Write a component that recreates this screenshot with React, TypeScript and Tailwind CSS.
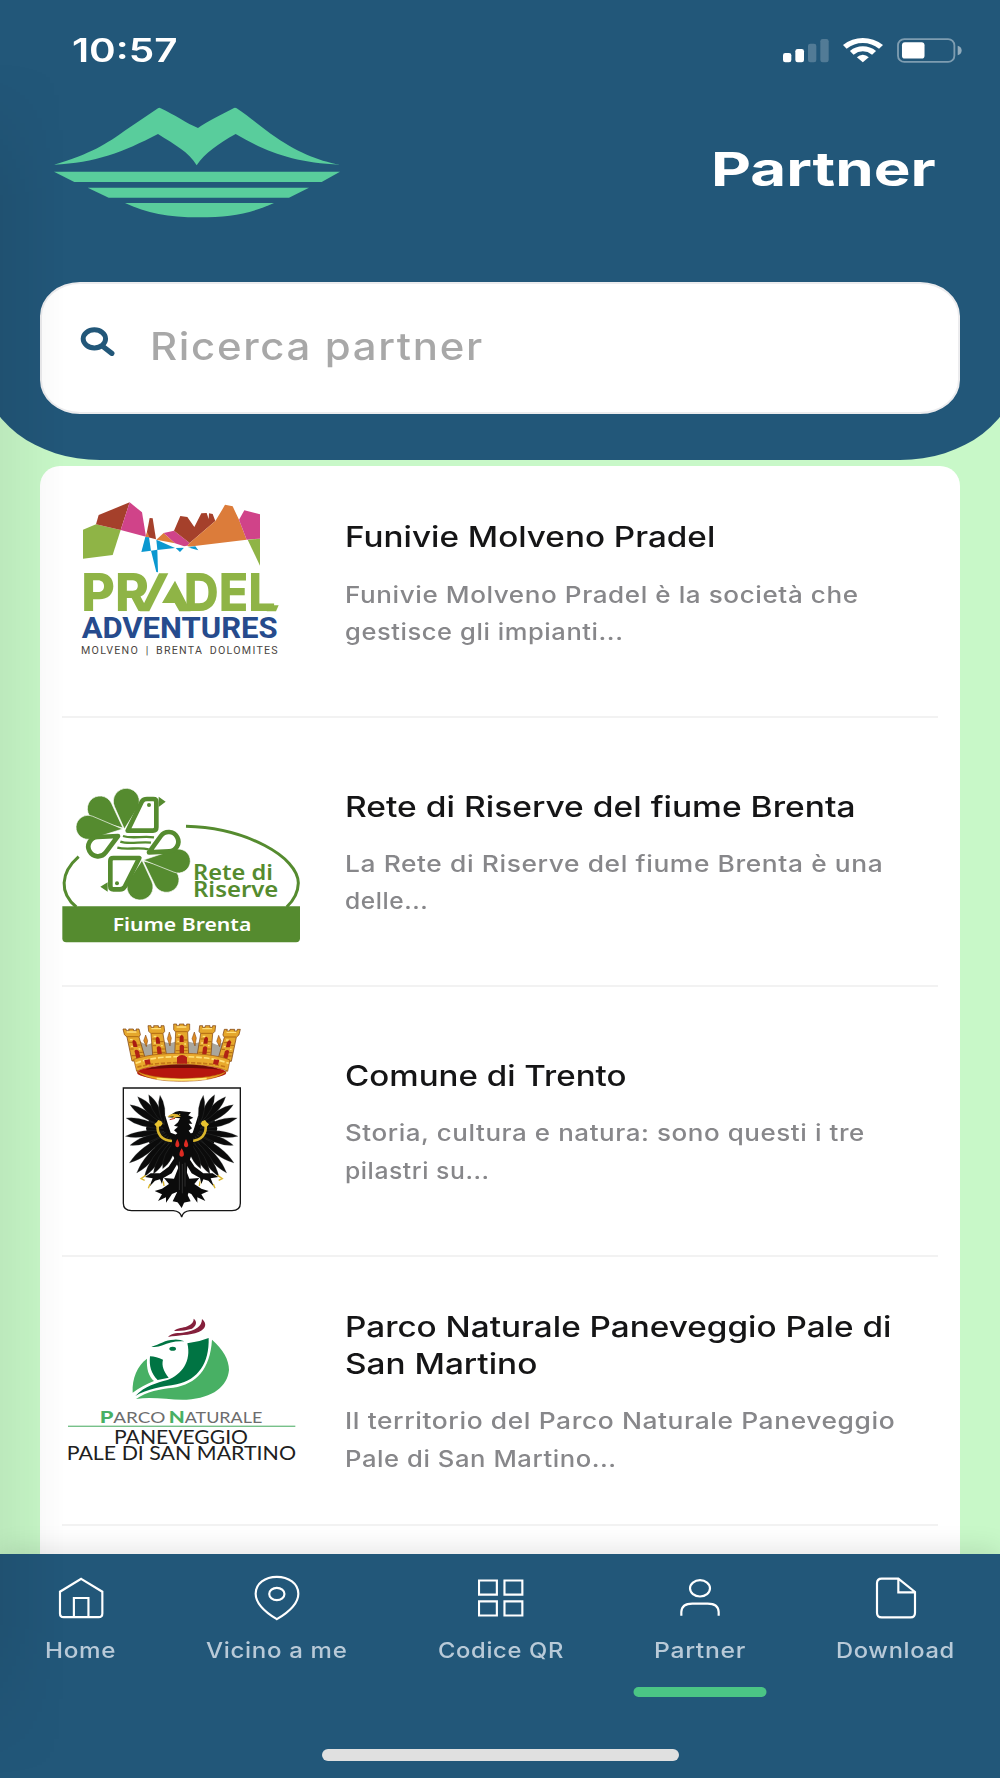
import { ReactNode, useLayoutEffect, useRef, useState } from 'react';

interface WideTextProps {
  width: number;
  className?: string;
  children: string;
}

// Stretches a single line of text horizontally to the given width
function WideText({ width, className = '', children }: WideTextProps) {
  const ref = useRef<HTMLSpanElement>(null);
  const [scale, setScale] = useState(1);

  useLayoutEffect(() => {
    if (ref.current) setScale(width / ref.current.offsetWidth);
  }, [width, children]);

  return (
    <span className="block" style={{ width }}>
      <span
        ref={ref}
        className={`inline-block origin-left whitespace-nowrap align-top ${className}`}
        style={{ transform: `scaleX(${scale})` }}
      >
        {children}
      </span>
    </span>
  );
}

function SignalIcon() {
  return (
    <svg viewBox="851 114 138 75" className="h-[25px] w-[46px]" fill="#fff">
      <rect x="851" y="159" width="25" height="28" rx="7" />
      <rect x="888" y="147" width="26" height="40" rx="7" />
      <rect x="926" y="131" width="25" height="56" rx="7" opacity=".22" />
      <rect x="963" y="117" width="25" height="70" rx="7" opacity=".22" />
    </svg>
  );
}

function WifiIcon() {
  return (
    <svg viewBox="1029 114 121 75" className="h-[25px] w-[40px]" fill="#fff">
      <path d="M1029 135Q1056 114 1089 114T1150 135L1138 146Q1116 129 1089 129T1040 146Z" />
      <path d="M1050 153Q1067 139 1089 139T1129 153L1117 164Q1104 154 1089 154T1061 164Z" />
      <path d="M1071 172Q1079 164 1089 164T1107 172L1089 187Z" />
    </svg>
  );
}

function BatteryIcon() {
  return (
    <svg viewBox="1191 114 196 75" className="h-[25px] w-[65px]">
      <rect x="1194" y="117" width="170" height="69" rx="19" fill="none" stroke="#fff" strokeWidth="5.500" opacity=".42" />
      <rect x="1206" y="127" width="68" height="49" rx="9" fill="#fff" />
      <path d="M1374 137Q1386 141 1386 151.500T1374 166Z" fill="#fff" opacity=".5" />
    </svg>
  );
}

function BrandLogo() {
  return (
    <svg viewBox="162 320 858 333" className="mt-[6px] h-[111px] w-[286px] self-start" fill="#59cd9c">
      <path d="M162 493C270 462 325 427 374 391L474 324Q478 321 482 324C524 343 560 370 594 383C622 364 664 342 702 323Q706 321 710 324C748 350 780 376 812 400C890 455 950 480 1020 493C880 486 800 455 707 401C655 430 615 458 590 495C566 454 525 434 474 401C370 455 285 488 162 493Z" />
      <path d="M162 514H1020L965 545H223Z" />
      <path d="M263 562H927L867 592H326Z" />
      <path d="M375 608H822C745 642 690 651 597 651S440 638 375 608Z" />
    </svg>
  );
}

function SearchIcon() {
  return (
    <svg viewBox="240 202 105 88" className="h-[29px] w-[35px]" fill="none" stroke="#225779">
      <ellipse cx="283" cy="238" rx="34" ry="27.500" strokeWidth="15" />
      <path d="M310 262L336 282" strokeWidth="16" strokeLinecap="round" />
    </svg>
  );
}

function PradelLogo() {
  return (
    <svg viewBox="6 10 714 600" className="h-[200px] w-[238px]">
      <path d="M69 150L108 134L182 151L158 226L69 237Z" fill="#8fb446" />
      <path d="M108 134L116 106L209 68L182 151Z" fill="#a5402b" />
      <path d="M209 68L246 98L258 171L182 151Z" fill="#d04389" />
      <path d="M258 171L269 115L278 116L288 179Z" fill="#a5402b" />
      <path d="M257 172L262 157L268 173Z" fill="#dc7c3a" />
      <path d="M256 172L267 173L273 213L244 217Z" fill="#0b98d0" />
      <path d="M273 213L292 210L294 278L289 277Z" fill="#0b98d0" />
      <path d="M289 180L345 205L292 211Z" fill="#0b98d0" />
      <path d="M289 180L311 160L345 191Z" fill="#dc7c3a" />
      <path d="M311 160L342 153L389 190L379 202L345 191Z" fill="#d04389" />
      <path d="M342 153L361 109L382 112L403 142L424 101L440 100L446 118L447 101L458 103L466 124L389 190Z" fill="#a5402b" />
      <path d="M389 190L466 124L486 91L495 75L518 80L537 120L560 180L379 202Z" fill="#dc7c3a" />
      <path d="M537 120L553 92L600 104V177L560 180Z" fill="#d04389" />
      <path d="M563 180L600 177V258Z" fill="#8fb446" />
      <path d="M347 205L372 204L360 217ZM382 203L406 200L415 212Z" fill="#0b98d0" />
      <path d="M366 203L379 198L393 203L379 205Z" fill="#fff" />

      {/* PRADEL: the A is a slanted stroke with a small peak */}
      <g fill="#8fb446" fontFamily="Inter, sans-serif" fontWeight="800" fontSize="158">
        <text x="64" y="395" textLength="204" lengthAdjust="spacingAndGlyphs">PR</text>
        <text x="371" y="395" textLength="276" lengthAdjust="spacingAndGlyphs">DEL</text>
      </g>
      <path d="M240 395L297 281H325L268 395Z" fill="#8fb446" />
      <path d="M345 303L392 395H358L344 370H306Z" fill="#8fb446" />
      <path d="M628 377H656L648 395H620Z" fill="#8fb446" />
      <text x="65" y="475" textLength="588" lengthAdjust="spacingAndGlyphs" fontFamily="Roboto, sans-serif" fontWeight="700" fontSize="88" fill="#264b8d">ADVENTURES</text>
      <text x="63" y="524" textLength="590" lengthAdjust="spacing" fontFamily="Roboto, sans-serif" fontSize="32" fill="#4b4642" wordSpacing="8">MOLVENO | BRENTA DOLOMITES</text>
    </svg>
  );
}

// Drop shape: a point at (bx, by) with tangents to a circle of radius r
function leafPath(bx: number, by: number, cx: number, cy: number, r: number) {
  const d = Math.hypot(cx - bx, cy - by);
  const angle = Math.atan2(by - cy, bx - cx);
  const spread = Math.acos(r / d);
  const x1 = cx + r * Math.cos(angle + spread);
  const y1 = cy + r * Math.sin(angle + spread);
  const x2 = cx + r * Math.cos(angle - spread);
  const y2 = cy + r * Math.sin(angle - spread);
  return `M${bx} ${by}L${x1} ${y1}A${r} ${r} 0 1 1 ${x2} ${y2}Z`;
}

function ReteRiserveLogo() {
  return (
    <svg viewBox="36 -35 714 561" className="h-[187px] w-[238px]">
      <g fill="none" stroke="#558b2f" strokeWidth="9">
        <path d="M408 170C590 175 744 262 745 340Q744 380 710 412" />
        <path d="M86 261C30 310 28 370 79 412" />
      </g>
      <path d="M37 410H750V506Q750 518 738 518H49Q37 518 37 506Z" fill="#558b2f" />
      <g fill="#558b2f" stroke="#fff" strokeWidth="2">
        <path d={leafPath(223, 178, 229, 95, 39)} />
        <path d={leafPath(219, 175, 150, 117, 38)} />
        <path d={leafPath(218, 178, 114, 173, 36)} />
        <path d={leafPath(276, 272, 270, 352, 39)} />
        <path d={leafPath(280, 274, 349, 330, 38)} />
        <path d={leafPath(280, 271, 385, 274, 36)} />
      </g>
      <g fill="#558b2f">
        <path d="M326 81L347 96L326 112ZM173 338L151 351L173 366Z" />
        <circle cx="297" cy="106" r="6" />
        <circle cx="201" cy="341" r="6" />
      </g>
      <g fill="#fff" stroke="#558b2f" strokeWidth="14" strokeLinejoin="round">
        <path d="M233 183L276 95Q281 88 291 88H310Q319 88 319 97V173Q319 183 309 183Z" />
        <path d="M268 265H190Q181 265 181 274V350Q181 359 190 359H210Q220 359 225 350Z" />
        <path d={leafPath(204, 199, 144, 231, 29)} />
        <path d={leafPath(297, 248, 356, 216, 29)} />
      </g>
      <g fill="#558b2f">
        <circle cx="297" cy="106" r="6" />
        <circle cx="201" cy="341" r="6" />
      </g>
      <g fill="none" stroke="#558b2f" strokeWidth="7">
        <path d="M219 199C245 208 280 198 312 203" />
        <path d="M211 216C238 226 275 214 303 219" />
        <path d="M202 234C232 242 265 231 296 239" />
      </g>
      <g fontFamily="'Noto Sans', sans-serif" fontWeight="600" fill="#558b2f" fontSize="62">
        <text x="429" y="330" textLength="240" lengthAdjust="spacingAndGlyphs">Rete di</text>
        <text x="429" y="382" textLength="256" lengthAdjust="spacingAndGlyphs">Riserve</text>
      </g>
      <text x="188" y="483" textLength="416" lengthAdjust="spacingAndGlyphs" fontFamily="'Noto Sans', sans-serif" fontWeight="600" fontSize="54" fill="#fff">Fiume Brenta</text>
    </svg>
  );
}

// [base x, base y, tip x, tip y, width]
const feathers = [
  [186, 345, 90, 284, 21],
  [188, 340, 113, 260, 22],
  [190, 340, 146, 254, 21],
  [192, 345, 180, 256, 18],
  [190, 355, 78, 324, 20],
  [192, 364, 76, 379, 18],
  [196, 368, 90, 406, 20],
  [200, 374, 88, 459, 22],
  [205, 380, 110, 489, 22],
  [212, 384, 133, 500, 22],
  [220, 388, 160, 492, 22],
  [228, 390, 188, 476, 22],
];

function featherPath([bx, by, tx, ty, w]: number[]) {
  const len = Math.hypot(tx - bx, ty - by);
  const nx = (-(ty - by) / len) * w;
  const ny = ((tx - bx) / len) * w;
  const mx = bx + (tx - bx) * 0.6;
  const my = by + (ty - by) * 0.6;
  return `M${bx} ${by}Q${mx + nx} ${my + ny} ${tx} ${ty}Q${mx - nx} ${my - ny} ${bx} ${by}Z`;
}

function Wing() {
  return (
    <g>
      <path d="M150 320L170 312L196 318L206 350L212 368L245 380V430L225 440L180 425L148 400L138 355Z" fill="#0b0b0b" />
      {feathers.map((f, i) => (
        <path key={i} d={featherPath(f)} fill="#0b0b0b" stroke="#55585a" strokeWidth=".7" />
      ))}
      <path d="M174 343C168 374 188 391 216 393" fill="none" stroke="#d9b52b" strokeWidth="8" />
      <path d="M163 343L170 337L175 330L184 334L188 341L182 349L170 351Z" fill="#e8c32f" />
      {/* leg and claws */}
      <path d="M226 440L206 470L180 490L152 490L135 501L158 505L148 530L165 512L180 508L186 522L190 504L215 490L236 455Z" fill="#0b0b0b" />
      <path d="M137 496L123 506L134 511M150 522L145 535M190 514L192 528" fill="none" stroke="#d9b52b" strokeWidth="4" />
      {/* tail */}
      <path d="M238 465L222 506L192 504L207 522L186 536L164 543L186 553L174 573L198 562L198 578L216 552L232 545L218 574L240 578Z" fill="#0b0b0b" />
    </g>
  );
}

function Tower({ x, y, tilt }: { x: number; y: number; tilt: number }) {
  return (
    <g transform={`translate(${x} ${y}) skewX(${tilt})`}>
      <path d="M-24 0H-15V5H-7V0H7V5H15V0H24V17L18 24L21 96H-21L-18 24L-24 17Z" fill="#e5a72c" stroke="#7a3c0c" strokeWidth="2" />
      <path d="M-17 23H17M-16 40H-6M6 48H17M-17 60H-7M7 70H18M-18 80H18" stroke="#a8600f" strokeWidth="2.500" />
      <path d="M-15 9H14M-11 32H-3M-13 52H-7M8 60H13" stroke="#ffe07a" strokeWidth="4" />
      <path d="M-6 54V39Q0 27 6 39V54Z" fill="#a81c12" />
      <path d="M-6 94V66Q0 58 7 66V94Z" fill="#b02315" />
    </g>
  );
}

function TrentoLogo() {
  return (
    <svg viewBox="-114 3 714 660" className="h-[220px] w-[238px]">
      <path d="M112 90L140 105L175 92L210 100L245 90L285 100L320 92L352 105L380 92L366 160H124Z" fill="#aaa69c" />
      <g fill="#dd8c24" stroke="#7a3c0c" strokeWidth="1.500">
        <path d="M137 75L143 92L139 110L131 92ZM208 66L214 84L210 108L202 86ZM283 66L289 84L285 108L276 86ZM356 76L363 92L359 110L350 94Z" />
      </g>
      <Tower x={93} y={57} tilt={14} />
      <Tower x={168} y={47} tilt={7} />
      <Tower x={245} y={42} tilt={0} />
      <Tower x={323} y={47} tilt={-7} />
      <Tower x={397} y={58} tilt={-14} />
      <path d="M101 148C150 132 200 130 245 130S350 134 390 150L383 184C350 168 300 164 245 164S140 168 110 184Z" fill="#e9a92c" stroke="#9c5310" strokeWidth="2" />
      <path d="M107 160C150 142 200 140 245 140S345 144 386 160" fill="none" stroke="#ffe27a" strokeWidth="5" strokeDasharray="17 6" />
      <path d="M112 172C165 153 325 153 380 172" fill="none" stroke="#c57718" strokeWidth="5" strokeDasharray="13 5" />
      <path d="M231 161V142Q246 128 261 142V161ZM137 165L133 150L149 148L152 162ZM354 165L358 150L342 148L339 162Z" fill="#b32016" />
      <ellipse cx="245" cy="188" rx="134" ry="23" fill="#b6160e" />
      <path d="M135 180C180 158 315 158 360 180C320 172 170 172 135 180Z" fill="#6d0c08" />
      <path d="M110 181C122 203 180 214 245 214S370 203 381 181C365 198 300 205 245 205S126 197 110 181Z" fill="#f0a323" stroke="#9c4b0d" strokeWidth="1.500" />
      <path d="M170 206Q245 213 320 206" fill="none" stroke="#ffec7c" strokeWidth="5" />

      <path d="M70 234H421V580Q421 602 396 602H270Q249 604 245 621Q241 604 220 602H95Q70 602 70 580Z" fill="#fff" stroke="#161616" strokeWidth="4" />
      <Wing />
      <g transform="translate(490 0) scale(-1 1)">
        <Wing />
      </g>
      <path d="M204 322L217 311Q230 300 246 304L273 307L265 316L280 323L268 329L277 341L266 341L276 355L266 362L280 380L278 425L262 470L258 520L266 548L245 594L228 570L236 520L234 470L212 420L218 382L232 370L222 361L234 350L222 347L234 337L240 325Z" fill="#0b0b0b" />
      <path d="M202 321Q214 307 233 313L243 320L228 322L214 327L222 319Z" fill="#dfb632" />
      <path d="M209 329L225 325" stroke="#c3271d" strokeWidth="3" />
      <circle cx="239" cy="313" r="2" fill="#e6c94a" />
      <g fill="#dd2b22">
        <path d="M232 387Q241 403 237 409Q232 415 227 409Q223 403 232 387ZM258 387Q267 403 264 409Q258 415 253 409Q249 403 258 387ZM245 415Q254 430 251 437Q245 443 239 437Q236 430 245 415Z" />
      </g>
      <path d="M238 455V540M247 462V550M255 458V530" stroke="#777" strokeWidth="1" />
    </svg>
  );
}

function PaneveggioLogo() {
  return (
    <svg viewBox="36 1 714 540" className="h-[180px] w-[238px]">
      <path d="M486 120C520 150 537 180 537 211C532 260 490 295 410 300C360 302 310 290 258 298C290 275 330 268 370 264C440 252 480 210 486 120Z" fill="#48b064" />
      <path d="M248 279C246 235 262 198 291 177C289 207 296 230 312 244C288 254 268 264 248 279Z" fill="#48b064" />
      <path d="M300 170C313 170 325 175 339 180C334 198 342 216 356 234L323 241C303 222 297 198 300 170Z" fill="#007443" />
      <path d="M412 131Q444 128 476 115C478 190 445 240 380 254C340 261 290 268 256 289C285 258 320 250 352 241C395 226 425 185 412 131Z" fill="#007443" />
      <path d="M304 141C330 134 345 120 372 120Q390 119 403 125C375 123 355 130 338 137Q320 144 304 141Z" fill="#007443" />
      <ellipse cx="368" cy="147" rx="10" ry="6" fill="#007443" />
      <path d="M372 94C384 84 398 86 412 80Q432 71 431 57C442 64 440 78 426 87Q402 95 372 94Z" fill="#85203c" />
      <path d="M354 112C366 98 385 102 405 98C436 92 456 80 456 58C472 72 468 88 446 97C418 108 385 106 354 112Z" fill="#85203c" />
      <g fontFamily="Lato, sans-serif" fill="#6d6d6d" fontSize="46">
        <text x="149" y="369" textLength="197" lengthAdjust="spacingAndGlyphs">
          <tspan fontWeight="900" fontSize="53" fill="#48b064">P</tspan>ARCO
        </text>
        <text x="356" y="369" textLength="281" lengthAdjust="spacingAndGlyphs">
          <tspan fontWeight="900" fontSize="53" fill="#48b064">N</tspan>ATURALE
        </text>
      </g>
      <rect x="54" y="378" width="682" height="3.500" fill="#5db573" />
      <g fontFamily="Lato, sans-serif" fill="#202020" fontSize="56">
        <text x="192" y="434" textLength="402" lengthAdjust="spacingAndGlyphs">PANEVEGGIO</text>
        <text x="50" y="482" textLength="688" lengthAdjust="spacingAndGlyphs">PALE DI SAN MARTINO</text>
      </g>
    </svg>
  );
}

interface Line {
  text: string;
  width: number;
}

interface Partner {
  logo: ReactNode;
  title: Line[];
  description: Line[];
}

const partners: Partner[] = [
  {
    logo: <PradelLogo />,
    title: [{ text: 'Funivie Molveno Pradel', width: 370 }],
    description: [
      { text: 'Funivie Molveno Pradel è la società che', width: 513 },
      { text: 'gestisce gli impianti...', width: 279 },
    ],
  },
  {
    logo: <ReteRiserveLogo />,
    title: [{ text: 'Rete di Riserve del fiume Brenta', width: 510 }],
    description: [
      { text: 'La Rete di Riserve del fiume Brenta è una', width: 538 },
      { text: 'delle...', width: 83 },
    ],
  },
  {
    logo: <TrentoLogo />,
    title: [{ text: 'Comune di Trento', width: 281 }],
    description: [
      { text: 'Storia, cultura e natura: sono questi i tre', width: 520 },
      { text: 'pilastri su...', width: 145 },
    ],
  },
  {
    logo: <PaneveggioLogo />,
    title: [
      { text: 'Parco Naturale Paneveggio Pale di', width: 547 },
      { text: 'San Martino', width: 192 },
    ],
    description: [
      { text: 'Il territorio del Parco Naturale Paneveggio', width: 550 },
      { text: 'Pale di San Martino...', width: 272 },
    ],
  },
];

function PartnerRow({ partner }: { partner: Partner }) {
  return (
    <li className="flex h-[269.33px] items-center gap-[44.5px] border-b-2 border-[#f2f2f2] first:h-[252px] first:pb-[17px]">
      <div className="flex-shrink-0">{partner.logo}</div>
      <div className="flex flex-col gap-5 pt-1">
        <h2 className="text-[28.5px] font-medium leading-[37.4px] text-[#151516]">
          {partner.title.map((line) => (
            <WideText key={line.text} width={line.width}>{line.text}</WideText>
          ))}
        </h2>
        <p className="text-[22.5px] font-[450] leading-[37.4px] tracking-[0.5px] text-[#87878a]">
          {partner.description.map((line) => (
            <WideText key={line.text} width={line.width}>{line.text}</WideText>
          ))}
        </p>
      </div>
    </li>
  );
}

const tabs = [
  {
    label: 'Home',
    width: 71,
    icon: (
      <svg viewBox="175 225 139 138" className="h-[46px] w-[46px]">
        <path d="M245 236L309 275V341Q309 352 298 352H192Q181 352 181 341V275ZM223 352V294H267V352" />
      </svg>
    ),
  },
  {
    label: 'Vicino a me',
    width: 141,
    icon: (
      <svg viewBox="759 225 139 138" className="h-[46px] w-[46px]">
        <path d="M828 358C790 335 764 310 764 281C764 250 793 230 828 230S893 250 893 281C893 310 867 335 828 358Z" />
        <ellipse cx="828" cy="282" rx="23" ry="18.500" />
      </svg>
    ),
  },
  {
    label: 'Codice QR',
    width: 126,
    icon: (
      <svg viewBox="1432 225 139 138" className="h-[46px] w-[46px]">
        <path d="M1435 241H1489V284H1435ZM1512 241H1566V284H1512ZM1435 304H1489V347H1435ZM1512 304H1566V347H1512Z" />
      </svg>
    ),
  },
  {
    label: 'Partner',
    width: 92,
    active: true,
    icon: (
      <svg viewBox="531 225 138 138" className="h-[46px] w-[46px]">
        <ellipse cx="600" cy="265" rx="30" ry="24.500" />
        <path d="M544 347V336Q545 311 577 311H623Q655 311 656 336V347" />
      </svg>
    ),
  },
  {
    label: 'Download',
    width: 119,
    icon: (
      <svg viewBox="1115 225 138 138" className="h-[46px] w-[46px]">
        <path d="M1191 236H1141Q1127 236 1127 250V338Q1127 352 1141 352H1228Q1241 352 1241 338V276ZM1191 236V277H1241" />
      </svg>
    ),
  },
];

export default function App() {
  return (
    <div className="relative flex h-[1778px] w-[1000px] flex-col overflow-hidden bg-[#c8f8c8] font-[Inter,sans-serif]">
      <header className="-mx-[17px] h-[460px] flex-shrink-0 rounded-b-[117px_90px] bg-[#225779] px-[17px]">
        <div className="flex h-[101px] items-center justify-between pl-[72px] pr-[38px]">
          <WideText width={105} className="pt-px text-[32px] font-semibold text-white">10:57</WideText>
          <div className="flex items-center gap-[14px]">
            <SignalIcon />
            <WifiIcon />
            <BatteryIcon />
          </div>
        </div>

        <div className="flex h-[137px] items-center justify-between pl-[54px] pr-[64px]">
          <BrandLogo />
          <h1 className="pb-0.5">
            <WideText width={225} className="text-[47px] font-bold leading-[56px] text-white">Partner</WideText>
          </h1>
        </div>

        <div className="mx-10 mt-11 flex h-[132px] items-center gap-[35px] rounded-[40px/34px] border-2 border-[#ececee] bg-white pl-[38px]">
          <div className="mb-3.5">
            <SearchIcon />
          </div>
          <WideText width={334} className="pb-0.5 text-[37.5px] font-[450] tracking-[1.5px] text-[#a8a8a8]">Ricerca partner</WideText>
        </div>
      </header>

      <main className="mx-10 mt-[6px] h-[1088px] flex-shrink-0 overflow-hidden rounded-t-[20px] bg-white px-[22px]">
        <ul>
          {partners.map((partner, i) => (
            <PartnerRow key={i} partner={partner} />
          ))}
        </ul>
      </main>

      <nav className="relative flex h-[224px] flex-shrink-0 flex-col bg-[#225779] shadow-[0_-4px_26px_rgba(0,0,0,0.11)]">
        <ul className="flex justify-between px-[45px] pt-[21px]">
          {tabs.map((tab) => (
            <li key={tab.label} className="relative flex flex-col items-center gap-[15px]">
              <div className="fill-none stroke-white stroke-[6.5]">{tab.icon}</div>
              <WideText width={tab.width} className="text-[21.5px] font-medium leading-7 tracking-[0.6px] text-[#b9cad8]">{tab.label}</WideText>
              {tab.active && (
                <span className="absolute left-1/2 top-[112px] h-[10px] w-[133px] -translate-x-1/2 rounded-full bg-[#4bc585]" />
              )}
            </li>
          ))}
        </ul>
        <div className="mx-auto mb-[17px] mt-auto h-3 w-[357px] rounded-full bg-[#e0e0e0]" />
      </nav>

      {/* Shadow along the left edge of the screen */}
      <div className="pointer-events-none absolute bottom-0 left-0 top-[60px] w-[65px] bg-gradient-to-r from-black/6 to-transparent [mask-image:linear-gradient(to_bottom,transparent,black_140px,black_1560px,transparent)]" />
    </div>
  );
}
